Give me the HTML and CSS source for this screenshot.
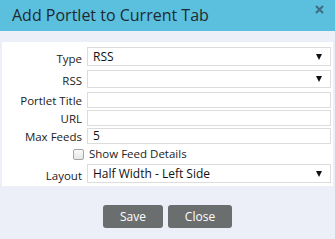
FILE: index.html
```html
<!doctype html>
<html>
	<head>
		<link rel="stylesheet" href="styles.css">
	</head>
	<body>
		<div class="dialog">
			<div class="dialog-header">
				<h2 class="dialog-title">Add Portlet to Current Tab</h2>
				<button class="dialog-close" title="Close">
					<svg width="9" height="9" viewBox="0 0 9 9"><path d="M1 1 L8 8 M8 1 L1 8" stroke="#3f6f82" stroke-width="2.2"/></svg>
				</button>
			</div>

			<div class="dialog-body">
				<form class="portlet-form">
					<label class="row-label">Type</label>
					<div class="field select-field tall">RSS<span class="caret"></span></div>

					<label class="row-label">RSS</label>
					<div class="field select-field mid"><span class="caret"></span></div>

					<label class="row-label">Portlet Title</label>
					<div class="field text-field"></div>

					<label class="row-label">URL</label>
					<div class="field text-field"></div>

					<label class="row-label">Max Feeds</label>
					<div class="field text-field">5</div>

					<span class="check-box"></span>
					<span class="check-label">Show Feed Details</span>

					<label class="row-label">Layout</label>
					<div class="field select-field tall">Half Width - Left Side<span class="caret"></span></div>
				</form>
			</div>

			<div class="dialog-footer">
				<button class="gray-button save">Save</button>
				<button class="gray-button close">Close</button>
			</div>
		</div>
	</body>
</html>
```
FILE: styles.css
```css
html, body {
	margin: 0;
	padding: 0;
}

body {
	width: 335px;
	height: 239px;
	background: #eceff7;
	font-family: "Open Sans", "DejaVu Sans", sans-serif;
	color: #222;
	overflow: hidden;
}

.dialog-header {
	height: 31px;
	background: #5bc0de;
	display: flex;
	align-items: flex-start;
	justify-content: space-between;
}
	.dialog-title {
		margin: 0;
		padding: 4px 0 0 12px;
		font-size: 16px;
		font-weight: normal;
		line-height: 22px;
		color: #1f2a30;
	}
	.dialog-close {
		border: none;
		background: none;
		padding: 0;
		margin: 5px 11px 0 0;
		width: 9px;
		height: 9px;
		display: flex;
	}

.dialog-body {
	margin: 11px 2px 0 2px;
	background: #fff;
	padding: 5px 2px 4px 0;
	height: 135px;
}

.portlet-form {
	display: grid;
	grid-template-columns: 80px 1fr;
	column-gap: 5px;
	align-items: center;
}
	.row-label {
		text-align: right;
		font-size: 11.5px;
		line-height: 16px;
		color: #222;
	}
	.field {
		box-sizing: border-box;
		border: 1px solid #dcdcdc;
		height: 16px;
		font-size: 12px;
		line-height: 14px;
		padding: 0 5px;
		position: relative;
		color: #111;
	}
	.field.tall {
		height: 19px;
		line-height: 17px;
	}
	.field.mid {
		height: 18px;
	}
	.portlet-form > .tall,
	.portlet-form > .mid {
		margin-bottom: 4px;
	}
	.portlet-form > .text-field {
		margin-bottom: 2px;
	}
	.caret {
		position: absolute;
		right: 8px;
		top: 50%;
		margin-top: -3px;
		width: 0;
		height: 0;
		border-left: 3.5px solid transparent;
		border-right: 3.5px solid transparent;
		border-top: 6px solid #111;
	}

	.check-box {
		justify-self: end;
		box-sizing: border-box;
		width: 11px;
		height: 11px;
		margin-right: -2px;
		border: 1px solid #a5a5a5;
		border-radius: 2px;
		background: linear-gradient(#fafafa, #e6e6e6);
		margin-bottom: 2px;
	}
	.check-label {
		font-size: 11.5px;
		line-height: 16px;
		padding-left: 2px;
		margin-bottom: 2px;
	}

.dialog-footer {
	display: flex;
	justify-content: center;
	gap: 5px;
	padding: 19px 0 0 0;
	margin-left: 0;
}

.gray-button {
	background: #6b6e6e;
	color: #fff;
	border: none;
	border-radius: 3px;
	height: 23px;
	font-family: "Open Sans", sans-serif;
	font-size: 12px;
	padding: 0;
}
	.gray-button.save {
		width: 60px;
	}
	.gray-button.close {
		width: 64px;
	}
```
